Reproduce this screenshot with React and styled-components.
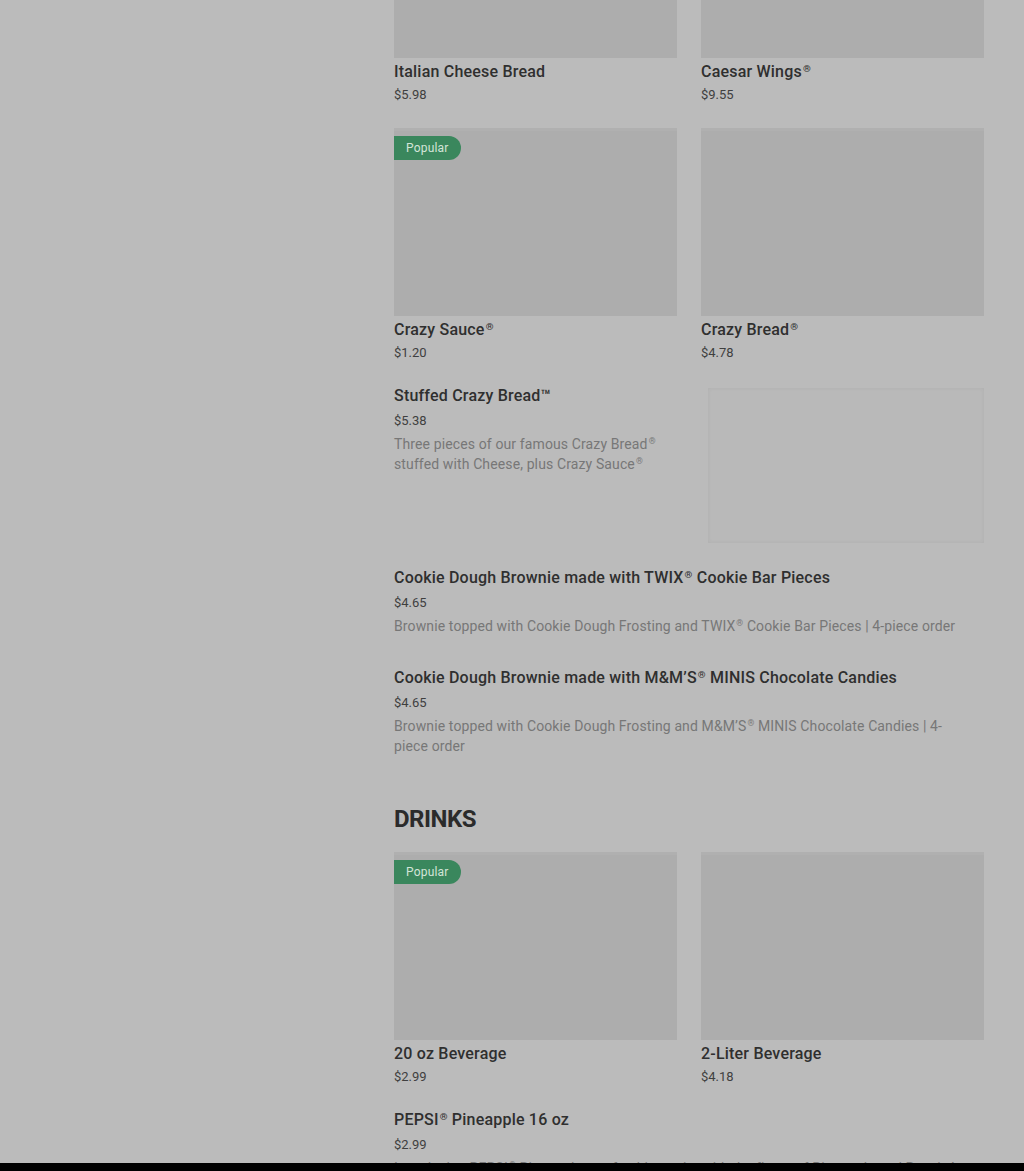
import * as React from 'react';
import styled, { createGlobalStyle } from 'styled-components';

const GlobalStyle = createGlobalStyle`
  html, body {
    margin: 0;
    padding: 0;
    background: #000;
    font-family: Roboto, "Noto Sans", sans-serif;
  }
`;

const Page = styled.div`
  height: 1163px;
  overflow: hidden;
  background: #bbbbbb;
  display: grid;
  grid-template-columns: 394px 590px;
`;

const Sidebar = styled.aside``;

const Main = styled.main`
  margin-top: -130px;
  display: flex;
  flex-direction: column;
`;

const Grid = styled.div`
  display: grid;
  grid-template-columns: 283px 283px;
  column-gap: 24px;
  row-gap: 22px;
  margin-bottom: 20px;
`;

const Card = styled.div`
  display: flex;
  flex-direction: column;
`;

const Thumb = styled.div`
  position: relative;
  height: 188px;
  background: #adadad;
  box-shadow: inset 0 3px 0 rgba(255, 255, 255, 0.04);
`;

const Badge = styled.span`
  position: absolute;
  left: 0;
  top: 8px;
  height: 24px;
  padding: 0 12px;
  display: flex;
  align-items: center;
  background: #3a875d;
  color: #d3e4d8;
  font-size: 12px;
  letter-spacing: 0.2px;
  border-radius: 0 12px 12px 0;
`;

const Title = styled.div`
  font-size: 16px;
  font-weight: 500;
  line-height: 24px;
  letter-spacing: 0.2px;
  color: #2f2f2f;
  margin-top: ${(p) => (p.$card ? '2px' : '0')};
`;

const Price = styled.div`
  font-size: 13px;
  line-height: ${(p) => (p.$card ? '22px' : '25px')};
  color: #3f3f3f;
`;

const Desc = styled.div`
  font-size: 14px;
  line-height: 20px;
  letter-spacing: 0.12px;
  color: #777777;
  max-width: ${(p) => p.$max || '574px'};
  margin-top: 1px;
`;

const Mark = styled.span`
  font-size: 0.62em;
  line-height: 0;
  position: relative;
  top: -0.55em;
  margin-left: 1px;
`;

const ListItem = styled.div`
  display: flex;
  justify-content: space-between;
  gap: 16px;
  padding-bottom: ${(p) => p.$pad || '30px'};
`;

const ListText = styled.div`
  display: flex;
  flex-direction: column;
`;

const ListThumb = styled.div`
  width: 276px;
  height: 155px;
  margin-top: 4px;
  flex-shrink: 0;
  background: #b9b9b9;
  box-shadow: inset 0 0 4px rgba(0, 0, 0, 0.05);
`;

const SectionTitle = styled.h2`
  margin: 47px 0 17px;
  font-size: 24px;
  line-height: 32px;
  font-weight: 700;
  letter-spacing: -0.5px;
  color: #2b2b2b;
`;

const R = () => <Mark>®</Mark>;

const GridCard = ({ title, price, popular }) => (
  <Card>
    <Thumb>{popular && <Badge>Popular</Badge>}</Thumb>
    <Title $card>{title}</Title>
    <Price $card>{price}</Price>
  </Card>
);

const App = () => (
  <>
    <GlobalStyle />
    <Page>
      <Sidebar />
      <Main>
        <Grid>
          <GridCard title="Italian Cheese Bread" price="$5.98" />
          <GridCard title={<>Caesar Wings<R /></>} price="$9.55" />
          <GridCard title={<>Crazy Sauce<R /></>} price="$1.20" popular />
          <GridCard title={<>Crazy Bread<R /></>} price="$4.78" />
        </Grid>

        <ListItem $pad="23px">
          <ListText>
            <Title>Stuffed Crazy Bread™</Title>
            <Price>$5.38</Price>
            <Desc $max="290px">
              Three pieces of our famous Crazy Bread<R /> stuffed with Cheese, plus Crazy Sauce<R />
            </Desc>
          </ListText>
          <ListThumb />
        </ListItem>

        <ListItem>
          <ListText>
            <Title>Cookie Dough Brownie made with TWIX<R /> Cookie Bar Pieces</Title>
            <Price>$4.65</Price>
            <Desc>Brownie topped with Cookie Dough Frosting and TWIX<R /> Cookie Bar Pieces | 4-piece order</Desc>
          </ListText>
        </ListItem>

        <ListItem $pad="0">
          <ListText>
            <Title>Cookie Dough Brownie made with M&amp;M’S<R /> MINIS Chocolate Candies</Title>
            <Price>$4.65</Price>
            <Desc>Brownie topped with Cookie Dough Frosting and M&amp;M’S<R /> MINIS Chocolate Candies | 4-piece order</Desc>
          </ListText>
        </ListItem>

        <SectionTitle>DRINKS</SectionTitle>

        <Grid>
          <GridCard title="20 oz Beverage" price="$2.99" popular />
          <GridCard title="2-Liter Beverage" price="$4.18" />
        </Grid>

        <ListItem>
          <ListText>
            <Title>PEPSI<R /> Pineapple 16 oz</Title>
            <Price>$2.99</Price>
            <Desc>Introducing PEPSI<R /> Pineapple, a refreshing twist with the flavor of Pineapple and Pepsi. A tropical</Desc>
          </ListText>
        </ListItem>
      </Main>
    </Page>
  </>
);

export default App;
